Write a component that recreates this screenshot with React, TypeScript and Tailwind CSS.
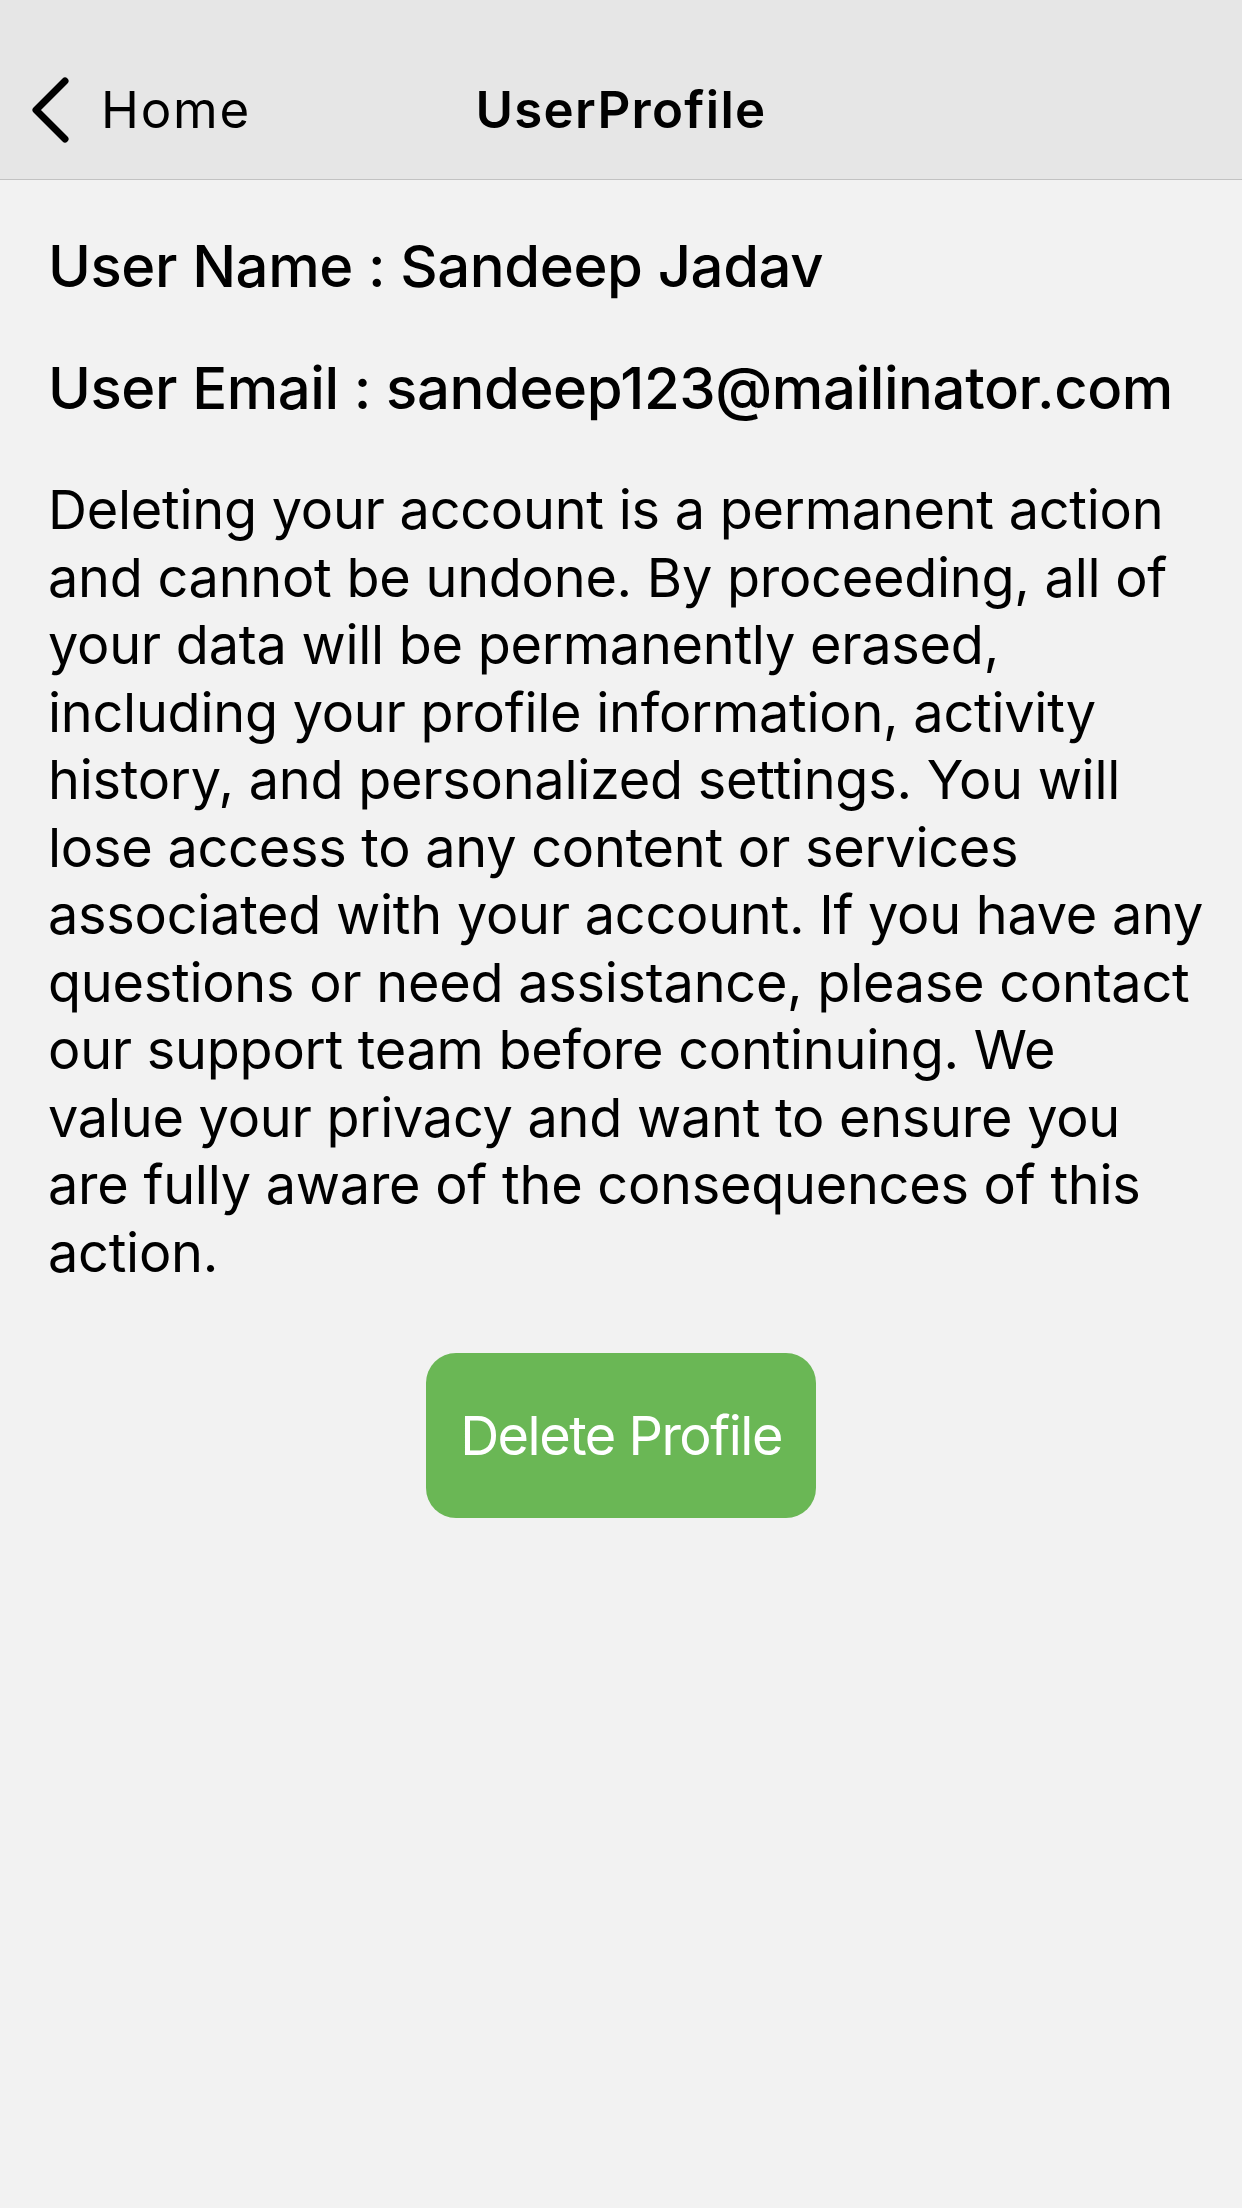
import React from "react";

const bodyLines = [
  "Deleting your account is a permanent action",
  "and cannot be undone. By proceeding, all of",
  "your data will be permanently erased,",
  "including your profile information, activity",
  "history, and personalized settings. You will",
  "lose access to any content or services",
  "associated with your account. If you have any",
  "questions or need assistance, please contact",
  "our support team before continuing. We",
  "value your privacy and want to ensure you",
  "are fully aware of the consequences of this",
  "action.",
];

export default function App() {
  return (
    <div
      className="w-[1242px] h-[2208px] bg-[#f2f2f2] text-black flex flex-col"
      style={{ fontFamily: "Inter, 'Noto Sans', sans-serif" }}
    >
      <header className="h-[180px] bg-[#e6e6e6] border-b border-[#c2c2c2] pt-[39px] flex items-center relative shrink-0">
        <div className="flex items-center pl-[30px]">
          <svg width="40" height="66" viewBox="0 0 40 66" className="mt-[2px]">
            <path
              d="M35 4 L6 33 L35 62"
              fill="none"
              stroke="#000"
              strokeWidth="7"
              strokeLinecap="round"
              strokeLinejoin="round"
            />
          </svg>
          <span className="ml-[31px] text-[51px] leading-none tracking-[1.8px]">Home</span>
        </div>
        <div className="absolute left-0 right-0 top-[39px] bottom-0 flex items-center justify-center pointer-events-none">
          <span className="text-[51px] font-semibold leading-none tracking-[1.3px]">UserProfile</span>
        </div>
      </header>

      <main className="px-[48px] flex flex-col">
        <p className="mt-[50px] text-[58px] leading-[72px] font-medium tracking-[-0.4px] whitespace-nowrap">
          User Name : Sandeep Jadav
        </p>
        <p className="mt-[50px] text-[58px] leading-[72px] font-medium tracking-[-0.4px] whitespace-nowrap">
          User Email : sandeep123@mailinator.com
        </p>
        <p className="mt-[52px] text-[54px] leading-[67.5px] tracking-[-0.25px]">
          {bodyLines.map((line, i) => (
            <span key={i} className="block whitespace-nowrap">
              {line}
            </span>
          ))}
        </p>
        <div className="mt-[67px] flex justify-center">
          <button className="h-[165px] w-[390px] rounded-[30px] bg-[#6ab755] text-white text-[54px] leading-none tracking-[-1.5px]">
            Delete Profile
          </button>
        </div>
      </main>
    </div>
  );
}
